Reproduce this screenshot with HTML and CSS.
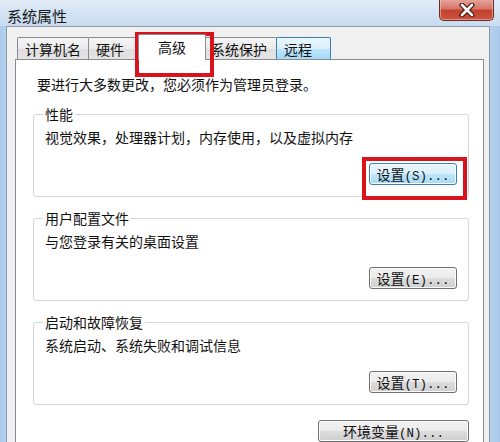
FILE: index.html
```html
<!DOCTYPE html>
<html>
<head>
    <meta charset="utf-8">
    <title>系统属性</title>
    <link rel="stylesheet" href="styles.css">
</head>
<body>
    <div class="window">
        <div class="titlebar">
            <span class="title">系统属性</span>
            <button class="close-btn">
                <svg width="20" height="14" viewBox="0 0 20 14">
                    <path d="M5 2 L15 12 M15 2 L5 12" stroke="#4a1510" stroke-width="5" stroke-linecap="round"/>
                    <path d="M5 2 L15 12 M15 2 L5 12" stroke="#ffffff" stroke-width="2.6" stroke-linecap="round"/>
                </svg>
            </button>
        </div>

        <div class="dialog">
            <div class="tabs">
                <div class="tab">计算机名</div>
                <div class="tab tab-narrow">硬件</div>
                <div class="tab tab-active">高级</div>
                <div class="tab tab-wide">系统保护</div>
                <div class="tab tab-hover">远程</div>
            </div>

            <div class="panel">
                <p class="intro">要进行大多数更改，您必须作为管理员登录。</p>

                <fieldset class="group">
                    <legend>性能</legend>
                    <p class="group-desc">视觉效果，处理器计划，内存使用，以及虚拟内存</p>
                    <div class="group-actions">
                        <button class="btn btn-focus">设置<span class="acc">(S)...</span></button>
                    </div>
                </fieldset>

                <fieldset class="group">
                    <legend>用户配置文件</legend>
                    <p class="group-desc">与您登录有关的桌面设置</p>
                    <div class="group-actions">
                        <button class="btn">设置<span class="acc">(E)...</span></button>
                    </div>
                </fieldset>

                <fieldset class="group">
                    <legend>启动和故障恢复</legend>
                    <p class="group-desc">系统启动、系统失败和调试信息</p>
                    <div class="group-actions">
                        <button class="btn">设置<span class="acc">(T)...</span></button>
                    </div>
                </fieldset>

                <div class="panel-actions">
                    <button class="btn btn-wide">环境变量<span class="acc">(N)...</span></button>
                </div>
            </div>
        </div>

        <!-- red annotation boxes -->
        <div class="mark mark-tab"></div>
        <div class="mark mark-btn"></div>
    </div>
</body>
</html>
```

FILE: styles.css
```css
body {
    margin: 0;
    font-family: "Noto Sans CJK SC", "Liberation Sans", sans-serif;
    font-size: 14px;
    color: #111;
}

.window {
    position: relative;
    width: 500px;
    height: 442px;
    overflow: hidden;
    display: flex;
    flex-direction: column;
    background: linear-gradient(90deg, #a9cbec 0%, #bcd5ee 2%, #c6dbef 50%, #b7d1ec 98%, #a6c7e8 100%);
}

.titlebar {
    height: 33px;
    display: flex;
    justify-content: space-between;
    align-items: flex-start;
    background: linear-gradient(#e2ecf7, #d0e1f2 60%, #c9dcef);
}

.title {
    padding: 6px 0 0 7px;
    font-size: 15px;
    line-height: 20px;
    color: #1a1a1a;
}

.close-btn {
    width: 55px;
    height: 22px;
    margin: -1px 6px 0 0;
    padding: 0;
    display: flex;
    align-items: center;
    justify-content: center;
    border: 1px solid #6e2b24;
    border-top: none;
    border-radius: 0 0 5px 5px;
    background: linear-gradient(#e5a89f 0%, #d7776a 45%, #c4412f 55%, #c9543f 100%);
    box-shadow: inset 0 0 0 1px rgba(255, 210, 200, 0.5);
}

.dialog {
    flex: 1;
    display: flex;
    flex-direction: column;
    margin: 0 10px 0 6px;
    padding: 7px 5px 0 8px;
    background-color: #f0f0f0;
    border: 1px solid #8e9aa8;
    border-bottom: none;
}

.tabs {
    height: 25px;
    display: flex;
    align-items: flex-end;
    padding-left: 2px;
}

.tab {
    box-sizing: border-box;
    height: 22px;
    padding: 2px 7px 0;
    margin-left: -1px;
    line-height: 19px;
    border: 1px solid #898c95;
    border-bottom: none;
    border-radius: 2px 2px 0 0;
    background: linear-gradient(#f5f5f5, #ebebeb 50%, #dedede 51%, #e4e4e4);
    white-space: nowrap;
}

.tab:first-child {
    margin-left: 0;
}

.tab-narrow {
    min-width: 52px;
}

.tab-wide {
    min-width: 74px;
}

.tab-active {
    position: relative;
    z-index: 1;
    width: 68px;
    height: 26px;
    margin: 0 -2px -1px -2px;
    padding-top: 3px;
    text-align: center;
    background: #ffffff;
}

.tab-hover {
    min-width: 55px;
    background: linear-gradient(#eaf6fd, #d9f0fc 50%, #bee6fd 51%, #a7d9f5);
    border-color: #3c7fb1;
}

.panel {
    flex: 1;
    padding: 15px 14px 0 17px;
    background-color: #ffffff;
    border: 1px solid #898c95;
    border-bottom: none;
}

.intro {
    margin: 0 0 0 4px;
    line-height: 18px;
}

.group {
    margin: 13px 0 0;
    padding: 0 11px 11px 11px;
    border: 1px solid #d5d5d5;
    border-radius: 3px;
}

.group legend {
    margin-left: -2px;
    padding: 0 2px;
    line-height: 16px;
}

.group-desc {
    margin: 6px 0 0;
    line-height: 18px;
}

.group-actions {
    display: flex;
    justify-content: flex-end;
    margin-top: 17px;
}

.panel-actions {
    display: flex;
    justify-content: flex-end;
    margin-top: 15px;
}

.btn {
    box-sizing: border-box;
    width: 88px;
    height: 22px;
    padding: 0;
    font-family: "Noto Sans CJK SC", "Liberation Sans", sans-serif;
    font-size: 14px;
    line-height: 20px;
    color: #111;
    border: 1px solid #707070;
    border-radius: 3px;
    background: linear-gradient(#f2f2f2, #ebebeb 50%, #dddddd 51%, #cfcfcf);
    box-shadow: inset 0 0 0 1px #fbfbfb;
}

.btn-focus {
    border-color: #3c7fb1;
    background: linear-gradient(#eaf6fd, #d9f0fc 50%, #bee6fd 51%, #a7d9f5);
}

.btn-wide {
    width: 151px;
}

.acc {
    font-family: "Liberation Mono", monospace;
    font-size: 12.5px;
}

.mark {
    position: absolute;
    box-sizing: border-box;
    border: 4px solid #d8131c;
}

.mark-tab {
    left: 135px;
    top: 32px;
    width: 79px;
    height: 45px;
}

.mark-btn {
    left: 362px;
    top: 157px;
    width: 105px;
    height: 43px;
}
```
